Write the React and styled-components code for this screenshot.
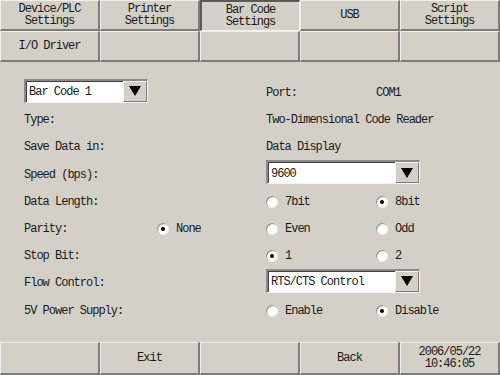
import React from "react";
import styled, { createGlobalStyle } from "styled-components";

const GlobalStyle = createGlobalStyle`
  html, body {
    margin: 0;
    padding: 0;
    background: #d4d0c8;
  }
  body {
    font-family: "Liberation Mono", "DejaVu Sans Mono", monospace;
    font-size: 12px;
    letter-spacing: -1px;
    color: #1a1a1a;
  }
`;

const Screen = styled.div`
  width: 500px;
  height: 375px;
  background: #d4d0c8;
  display: flex;
  flex-direction: column;
  overflow: hidden;
`;

const ButtonGrid = styled.div`
  display: grid;
  grid-template-columns: repeat(5, 100px);
  grid-auto-rows: ${(p) => p.rowHeight || 31}px;
`;

const PanelButton = styled.div`
  box-sizing: border-box;
  display: flex;
  align-items: center;
  justify-content: center;
  text-align: center;
  line-height: 12px;
  white-space: pre-line;
  background: #d4d0c8;
  border-style: solid;
  border-width: 1px 2px 2px 1px;
  border-color: ${(p) =>
    p.active
      ? "#5a5a5a #f2f2f2 #f2f2f2 #5a5a5a"
      : "#f0efec #7c7c7c #7c7c7c #f0efec"};
  ${(p) => p.active && "border-width: 2px 1px 1px 2px;"}
`;

const Content = styled.div`
  flex: 1;
  display: grid;
  grid-template-columns: 133px 109px 110px 1fr;
  grid-auto-rows: 27.2px;
  align-items: center;
  padding: 15px 0 0 24px;
`;

const Label = styled.div`
  grid-column: ${(p) => p.col || 1} / span ${(p) => p.span || 1};
  padding-top: 5px;
  white-space: nowrap;
`;

const Select = styled.div`
  grid-column: ${(p) => p.col || 1} / span ${(p) => p.span || 1};
  box-sizing: border-box;
  width: ${(p) => p.width}px;
  height: 24px;
  display: flex;
  background: #fff;
  border-style: solid;
  border-width: 2px 1px 1px 2px;
  border-color: #8a8a8a #f4f4f4 #f4f4f4 #8a8a8a;
  box-shadow: inset 1px 1px 0 #404040;
`;

const SelectValue = styled.div`
  flex: 1;
  display: flex;
  align-items: center;
  padding: 2px 0 0 3px;
`;

const SelectArrow = styled.div`
  box-sizing: border-box;
  width: 24px;
  background: #d4d0c8;
  border-style: solid;
  border-width: 1px;
  border-color: #f4f4f4 #7c7c7c #7c7c7c #f4f4f4;
  display: flex;
  align-items: center;
  justify-content: center;
  svg {
    display: block;
  }
`;

const RadioItem = styled.div`
  grid-column: ${(p) => p.col};
  display: flex;
  align-items: center;
  gap: 7px;
  padding-top: 5px;
`;

const RadioCircle = styled.span`
  box-sizing: border-box;
  width: 12px;
  height: 12px;
  border-radius: 50%;
  background: #fff;
  box-shadow: inset 1px 1px 1px #8a8a8a, inset -1px -1px 0 #efefef;
  display: flex;
  align-items: center;
  justify-content: center;
  &::after {
    content: "";
    width: 4px;
    height: 4px;
    border-radius: 50%;
    background: ${(p) => (p.checked ? "#000" : "transparent")};
  }
`;

const Arrow = () => (
  <svg width="12" height="10" viewBox="0 0 12 10">
    <polygon points="0,0 12,0 6,10" fill="#000" />
  </svg>
);

const Dropdown = ({ value, col, span, width }) => (
  <Select col={col} span={span} width={width}>
    <SelectValue>{value}</SelectValue>
    <SelectArrow>
      <Arrow />
    </SelectArrow>
  </Select>
);

const Radio = ({ col, checked, children }) => (
  <RadioItem col={col}>
    <RadioCircle checked={checked} />
    <span>{children}</span>
  </RadioItem>
);

const topTabs = [
  { text: "Device/PLC\nSettings" },
  { text: "Printer\nSettings" },
  { text: "Bar Code\nSettings", active: true },
  { text: "USB" },
  { text: "Script\nSettings" },
  { text: "I/O Driver" },
  { text: "" },
  { text: "" },
  { text: "" },
  { text: "" },
];

const bottomButtons = ["", "Exit", "", "Back", "2006/05/22\n10:46:05"];

export default function App() {
  return (
    <>
      <GlobalStyle />
      <Screen>
        <ButtonGrid rowHeight={31}>
          {topTabs.map((t, i) => (
            <PanelButton key={i} active={t.active}>
              {t.text}
            </PanelButton>
          ))}
        </ButtonGrid>

        <Content>
          <Dropdown value="Bar Code 1" col={1} width={124} />
          <Label col={3}>Port:</Label>
          <Label col={4}>COM1</Label>

          <Label>Type:</Label>
          <Label col={3} span={2}>
            Two-Dimensional Code Reader
          </Label>

          <Label>Save Data in:</Label>
          <Label col={3} span={2}>
            Data Display
          </Label>

          <Label>Speed (bps):</Label>
          <Dropdown value="9600" col={3} span={2} width={154} />

          <Label>Data Length:</Label>
          <Radio col={3}>7bit</Radio>
          <Radio col={4} checked>
            8bit
          </Radio>

          <Label>Parity:</Label>
          <Radio col={2} checked>
            None
          </Radio>
          <Radio col={3}>Even</Radio>
          <Radio col={4}>Odd</Radio>

          <Label>Stop Bit:</Label>
          <Radio col={3} checked>
            1
          </Radio>
          <Radio col={4}>2</Radio>

          <Label>Flow Control:</Label>
          <Dropdown value="RTS/CTS Control" col={3} span={2} width={154} />

          <Label>5V Power Supply:</Label>
          <Radio col={3}>Enable</Radio>
          <Radio col={4} checked>
            Disable
          </Radio>
        </Content>

        <ButtonGrid rowHeight={33}>
          {bottomButtons.map((b, i) => (
            <PanelButton key={i}>{b}</PanelButton>
          ))}
        </ButtonGrid>
      </Screen>
    </>
  );
}
